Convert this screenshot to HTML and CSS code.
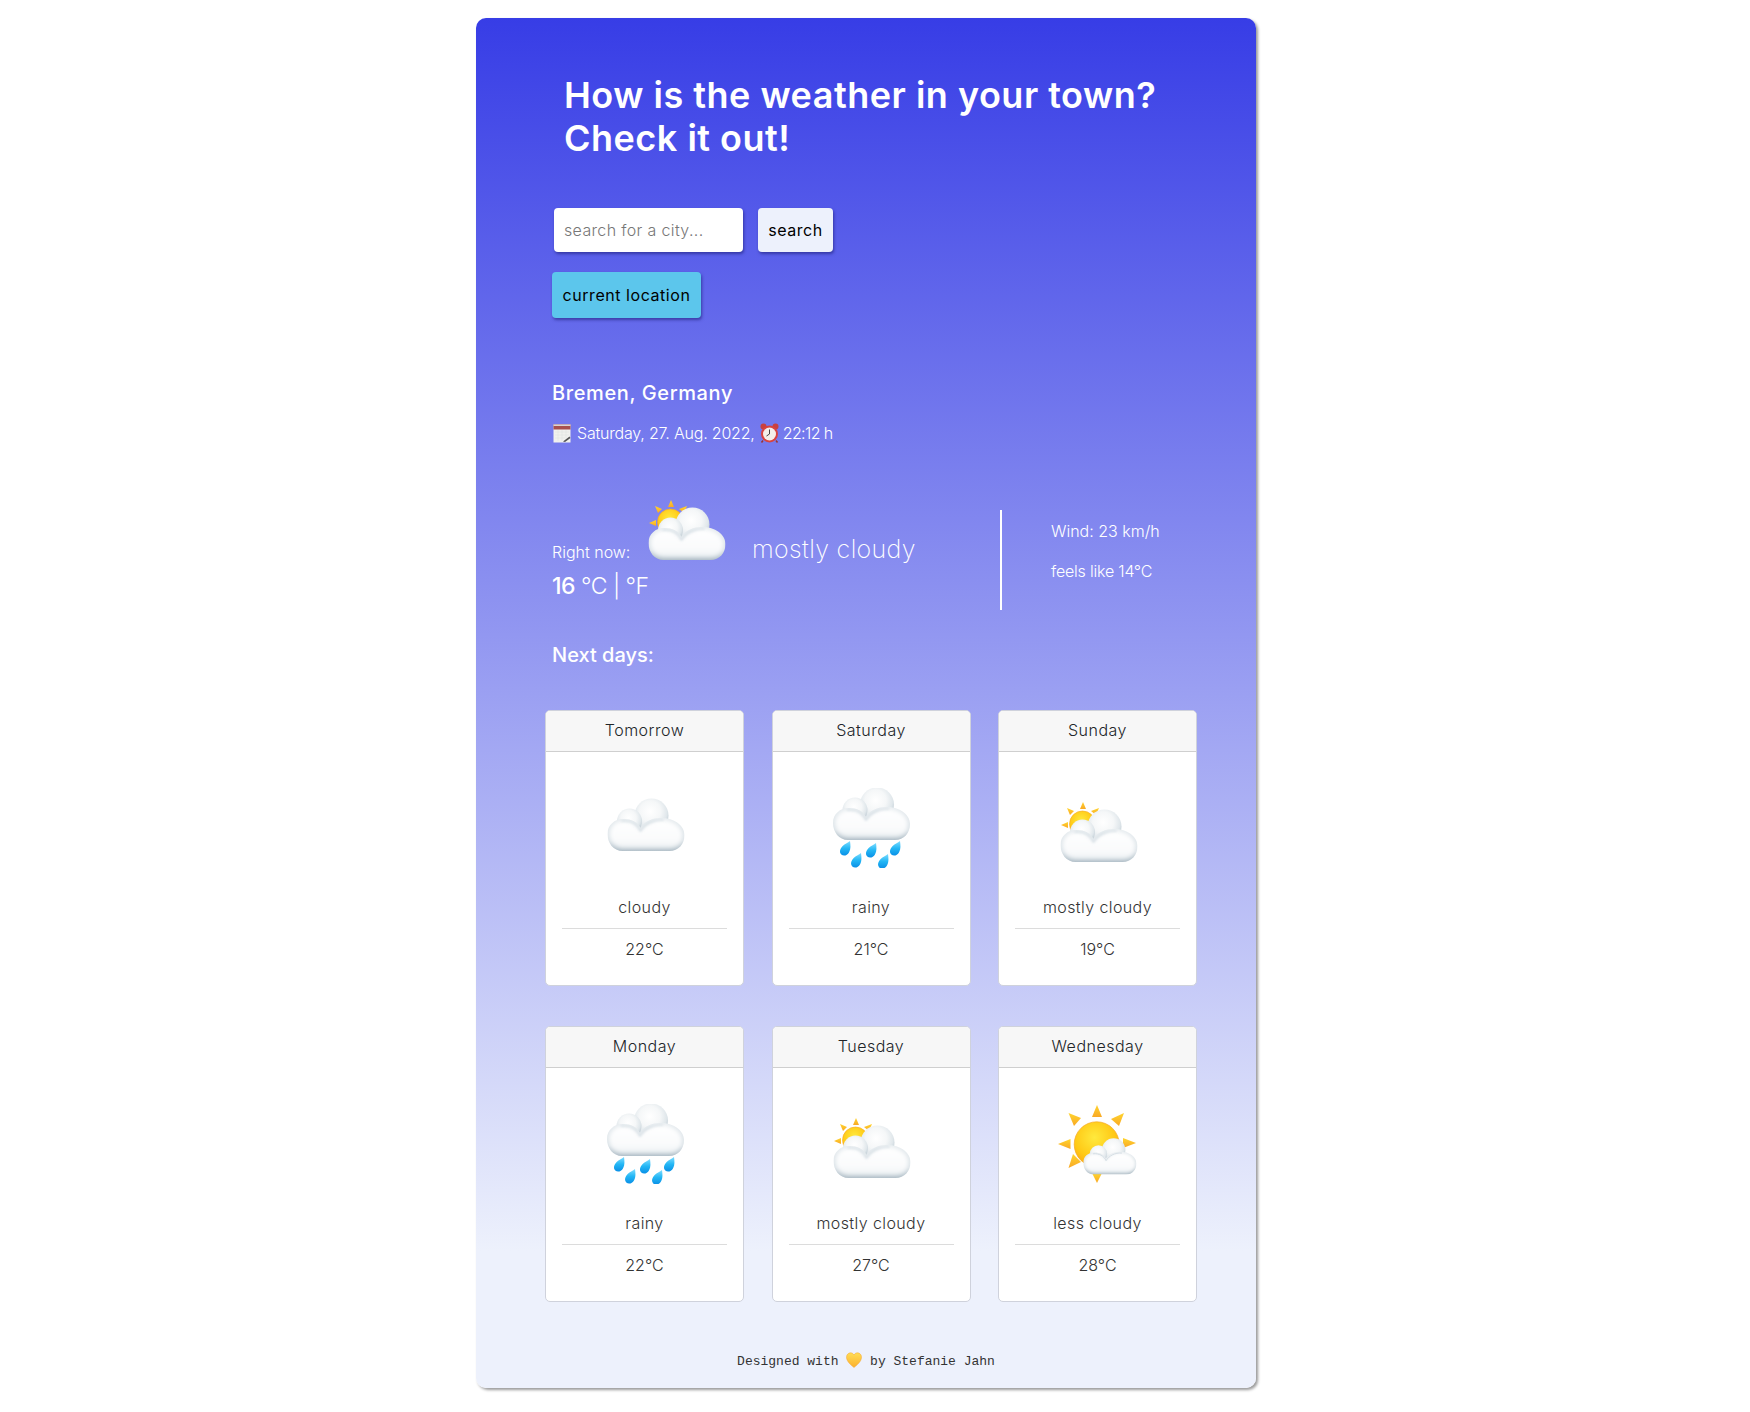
FILE: index.html
```html
<!DOCTYPE html>
<html lang="en">
<head>
<meta charset="utf-8">
<title>Weather</title>
<link rel="stylesheet" href="styles.css">
</head>
<body>
<svg class="defs" aria-hidden="true">
  <defs>
    <radialGradient id="cb" cx=".46" cy=".38" r=".62">
      <stop offset="0" stop-color="#ffffff"/><stop offset=".5" stop-color="#f5f7f8"/><stop offset=".8" stop-color="#e0e7eb"/><stop offset="1" stop-color="#c0ccd4"/>
    </radialGradient>
    <linearGradient id="cbase" x1="0" y1="0" x2="0" y2="1">
      <stop offset="0" stop-color="#e8edf0"/><stop offset=".7" stop-color="#d9e1e6"/><stop offset="1" stop-color="#a9b8c2"/>
    </linearGradient>
    <linearGradient id="cfill" x1="0" y1="0" x2="0" y2="1">
      <stop offset="0" stop-color="#ffffff"/><stop offset=".7" stop-color="#fafbfc"/><stop offset="1" stop-color="#eef2f4"/>
    </linearGradient>
    <radialGradient id="sun" cx=".45" cy=".35" r=".7">
      <stop offset="0" stop-color="#ffe93d"/><stop offset=".65" stop-color="#ffc814"/><stop offset="1" stop-color="#f9a01b"/>
    </radialGradient>
    <linearGradient id="ray" x1="0" y1="0" x2="0" y2="1">
      <stop offset="0" stop-color="#ffd52e"/><stop offset="1" stop-color="#f9a825"/>
    </linearGradient>
    <linearGradient id="drop" x1="0" y1="0" x2="0" y2="1">
      <stop offset="0" stop-color="#7fdcff"/><stop offset=".5" stop-color="#23b7f5"/><stop offset="1" stop-color="#0a8fe6"/>
    </linearGradient>
    <linearGradient id="heart" x1="0" y1="0" x2="0" y2="1">
      <stop offset="0" stop-color="#ffdd55"/><stop offset="1" stop-color="#fbb02d"/>
    </linearGradient>
    <filter id="soft" x="-20%" y="-20%" width="140%" height="140%"><feGaussianBlur stdDeviation="2.200"/></filter>
    <filter id="crease" x="-20%" y="-40%" width="140%" height="180%"><feGaussianBlur stdDeviation="1"/></filter>
    <clipPath id="cc"><path d="M15 51C6 51 0 43 0 34C0 25 7 19 16 19C24 19 30 22 33 28C37 21 45 18 54 18C66 18 77 25 77 35C77 44 71 51 62 51Z"/></clipPath>
    <g id="cloud">
      <circle cx="44" cy="15.500" r="17" fill="url(#cb)"/>
      <circle cx="22" cy="21" r="12.500" fill="url(#cb)"/>
      <g clip-path="url(#cc)">
        <rect x="-2" y="14" width="82" height="38" fill="url(#cbase)"/>
        <path d="M16 48C8 48 2 42 2 34C2 27 8 21 16 21C24 21 30 25 33 31C37 24 45 20 54 20C65 20 75 27 75 35C75 43 70 48 62 48Z" fill="url(#cfill)" filter="url(#soft)"/>
        <path d="M14 21C23 20 30 24 33 31C37 24 46 19 56 20" fill="none" stroke="#d5dee4" stroke-width="1.400" filter="url(#crease)"/>
      </g>
    </g>
    <g id="rd">
      <path d="M10 0C10.500 4 11 8 9 11.500C7.300 14.700 3.400 15.500 1.300 13.500C-.9 11.200 0 8 2.200 5.500C4.400 3 8 2 10 0Z" fill="url(#drop)"/>
    </g>
  </defs>
  <symbol id="i-cloud" viewBox="0 0 80 80"><use href="#cloud" transform="translate(2.500 12)"/></symbol>
  <symbol id="i-rain" viewBox="0 0 80 80">
    <use href="#cloud" transform="translate(2 1)"/>
    <use href="#rd" transform="translate(9 53)"/>
    <use href="#rd" transform="translate(20 65)"/>
    <use href="#rd" transform="translate(35 55)"/>
    <use href="#rd" transform="translate(47 66)"/>
    <use href="#rd" transform="translate(59 53)"/>
  </symbol>
  <symbol id="i-mostly" viewBox="0 0 80 80">
    <circle cx="24.500" cy="36" r="13" fill="url(#sun)" stroke="#f7a823" stroke-width=".6"/>
    <g fill="url(#ray)">
      <path d="M25 14L28 21L22 21Z"/>
      <path d="M3 37L10 34L10 40Z"/>
      <path d="M9 20L16 23L12 27Z"/>
      <path d="M41 20L38 27L33 23Z"/>
    </g>
    <use href="#cloud" transform="translate(2.500 23)"/>
  </symbol>
  <symbol id="i-less" viewBox="0 0 80 80">
    <circle cx="38.700" cy="40.300" r="22.500" fill="url(#sun)" stroke="#f7a823" stroke-width=".7"/>
    <g fill="url(#ray)">
      <path d="M39 1L44 13L34 13Z"/>
      <path d="M39 79L34 69L44 69Z"/>
      <path d="M0 40L12.500 35L12.500 45Z"/>
      <path d="M78 39L65 34L65 44Z"/>
      <path d="M10.500 9L23 14L16 22Z"/>
      <path d="M66 9L61 22L53 15Z"/>
      <path d="M10.500 64L15 50L23 58Z"/>
    </g>
    <use href="#cloud" transform="translate(25.300 35.300) scale(.69)"/>
  </symbol>
</svg>

<main class="app">
  <h1 class="title">How is the weather in your town?<br>Check it out!</h1>

  <form class="search">
    <input class="search-input" type="text" placeholder="search for a city...">
    <button class="btn btn-search" type="button">search</button>
  </form>
  <button class="btn btn-location" type="button">current location</button>

  <h2 class="city">Bremen, Germany</h2>
  <p class="date">
    <svg class="mini cal" viewBox="0 0 18 19"><rect x=".5" y=".5" width="17" height="18" fill="#f1f1ee"/><rect x=".5" y=".5" width="17" height="5" fill="#a8504f"/><rect x=".5" y=".5" width="17" height="1.500" fill="#d9d4d2"/><path d="M2 8H16M2 11H16M2 14H12M5 6V17M9 6V17M13 6V14" stroke="#dfe0dd" stroke-width=".5"/><path d="M10 17.500L16.500 12.500L17.500 14L12 18Z" fill="#555"/></svg>
    <span class="date-text">Saturday, 27. Aug. 2022,</span>
    <svg class="mini clock" viewBox="0 0 19 20"><circle cx="3.500" cy="3.500" r="3" fill="#c9413f"/><circle cx="15.500" cy="3.500" r="3" fill="#c9413f"/><path d="M3 17.500L1.500 19.500M16 17.500L17.500 19.500" stroke="#9b3432" stroke-width="1.500"/><circle cx="9.500" cy="11" r="8.500" fill="#d8433f"/><circle cx="9.500" cy="11" r="6.500" fill="#f4efea"/><path d="M9.500 6.500V11L6.500 13" fill="none" stroke="#444" stroke-width="1"/></svg>
    <span class="time-text">22:12 h</span>
  </p>

  <section class="now">
    <div class="now-main">
      <div class="now-top">
        <span class="now-label">Right now:</span>
        <svg class="wx now-icon"><use href="#i-mostly"/></svg>
        <span class="now-desc">mostly cloudy</span>
      </div>
      <div class="now-temp"><strong>16</strong> °C | °F</div>
    </div>
    <div class="now-side">
      <p>Wind: 23 km/h</p>
      <p class="feels">feels like 14°C</p>
    </div>
  </section>

  <h2 class="next">Next days:</h2>

  <section class="forecast">
    <article class="day">
      <header class="day-head">Tomorrow</header>
      <div class="day-body"><svg class="wx"><use href="#i-cloud"/></svg><p class="day-desc">cloudy</p></div>
      <p class="day-temp">22°C</p>
    </article>
    <article class="day">
      <header class="day-head">Saturday</header>
      <div class="day-body"><svg class="wx"><use href="#i-rain"/></svg><p class="day-desc">rainy</p></div>
      <p class="day-temp">21°C</p>
    </article>
    <article class="day">
      <header class="day-head">Sunday</header>
      <div class="day-body"><svg class="wx"><use href="#i-mostly"/></svg><p class="day-desc">mostly cloudy</p></div>
      <p class="day-temp">19°C</p>
    </article>
    <article class="day">
      <header class="day-head">Monday</header>
      <div class="day-body"><svg class="wx"><use href="#i-rain"/></svg><p class="day-desc">rainy</p></div>
      <p class="day-temp">22°C</p>
    </article>
    <article class="day">
      <header class="day-head">Tuesday</header>
      <div class="day-body"><svg class="wx"><use href="#i-mostly"/></svg><p class="day-desc">mostly cloudy</p></div>
      <p class="day-temp">27°C</p>
    </article>
    <article class="day">
      <header class="day-head">Wednesday</header>
      <div class="day-body"><svg class="wx"><use href="#i-less"/></svg><p class="day-desc">less cloudy</p></div>
      <p class="day-temp">28°C</p>
    </article>
  </section>

  <footer class="credit">Designed with <svg class="heart" viewBox="0 0 16 16"><path d="M8 15.500C5 13 .5 9.500 .5 5.200C.5 2.500 2.500 .8 4.500 .8C6 .8 7.300 1.600 8 3C8.700 1.600 10 .8 11.500 .8C13.500 .8 15.500 2.500 15.500 5.200C15.500 9.500 11 13 8 15.500Z" fill="url(#heart)" stroke="#f4a533" stroke-width=".5"/></svg> by Stefanie Jahn</footer>
</main>
</body>
</html>
```
FILE: styles.css
```css
* { box-sizing: border-box; }
html, body { margin: 0; padding: 0; background: #fff; }
body {
  padding-right: 18px;
  font-family: "Inter", "Open Sans", sans-serif;
  font-size: 16px;
  color: #212529;
}
p, h1, h2 { margin: 0; }

.defs { display: block; width: 0; height: 0; }

.app {
  width: 780px;
  height: 1370px;
  margin: 18px auto 24px;
  padding: 56px 54px 0 76px;
  border-radius: 10px;
  background: linear-gradient(#373de6, #edf1fc 90%);
  box-shadow: 2px 2px 3px rgba(0, 0, 0, .4);
  color: #fff;
}

.title {
  margin-left: 12px;
  font-size: 36px;
  line-height: 43px;
  font-weight: 600;
  white-space: nowrap;
  letter-spacing: .5px;
}

.search { display: flex; gap: 15px; margin: 48px 0 0 2px; }
.search-input {
  width: 189px;
  height: 44px;
  padding: 0 10px;
  border: 0;
  border-radius: 4px;
  background: #fff;
  font: 300 16px "Inter", sans-serif;
  letter-spacing: .35px;
  box-shadow: 1px 2px 3px rgba(20, 20, 100, .5);
}
.search-input::placeholder { color: #777; opacity: 1; }

.btn {
  display: block;
  border: 0;
  border-radius: 4px;
  color: #000;
  font: 400 16px "Inter", sans-serif;
  letter-spacing: .55px;
  padding: 0;
  box-shadow: 1px 2px 3px rgba(20, 20, 100, .5);
}
.btn-search { width: 75px; height: 44px; background: #edf1fc; }
.btn-location { width: 149px; height: 46px; margin-top: 20px; background: #5cc6ec; }

.city { margin-top: 61px; font-size: 20px; line-height: 28px; font-weight: 500; letter-spacing: .6px; }

.date {
  display: flex;
  align-items: center;
  margin-top: 14px;
  height: 24px;
  font-weight: 300;
  font-size: 16px;
}
.date-text { letter-spacing: -.2px; }
.time-text { letter-spacing: -.6px; }
.mini { display: block; flex: none; }
.cal { width: 18px; height: 19px; margin: 0 6px 0 1px; }
.clock { width: 19px; height: 20px; margin: 0 4px 0 5px; }

.now { display: flex; align-items: flex-start; margin-top: 41px; }
.now-main { width: 448px; }
.now-top { display: flex; align-items: flex-end; height: 80px; }
.now-label { width: 94px; padding-bottom: 2px; font-weight: 300; line-height: 24px; }
.now-desc { margin-left: 26px; padding-bottom: 2px; font-size: 25px; line-height: 30px; font-weight: 200; letter-spacing: .35px; white-space: nowrap; }
.now-temp { margin-top: 4px; font-size: 23px; line-height: 32px; font-weight: 300; letter-spacing: -.5px; }
.now-temp strong { font-weight: 500; }
.now-side {
  margin-top: 24px;
  height: 100px;
  padding: 9px 0 0 49px;
  border-left: 2px solid #fff;
  font-weight: 300;
  white-space: nowrap;
}
.now-side p { line-height: 24px; margin-bottom: 16px; }
.now-side .feels { letter-spacing: -.2px; }

.next { margin-top: 31px; font-size: 20px; line-height: 28px; font-weight: 500; }

.forecast {
  display: grid;
  grid-template-columns: repeat(3, 199px);
  gap: 40px 27.5px;
  width: 652px;
  margin: 41px 0 0 -7px;
}
.day {
  height: 276px;
  background: #fff;
  border: 1px solid #cfd2dc;
  border-radius: 5px;
  overflow: hidden;
  color: #333;
  font-weight: 300;
  text-align: center;
}
.day-head {
  height: 41px;
  line-height: 39px;
  background: #f7f7f7;
  border-bottom: 1px solid #cfcfcf;
  color: #212529;
  letter-spacing: .5px;
}
.day-body { margin: 0 16px; padding-top: 36px; height: 177px; border-bottom: 1px solid #dcdcdc; }
.wx { display: block; flex: none; width: 80px; height: 80px; margin: 0 auto; }
.now-icon { margin: 0; }
.day-desc { margin-top: 27px; line-height: 24px; letter-spacing: .4px; white-space: nowrap; }
.day-temp { margin-top: 8px; line-height: 24px; }

.credit {
  margin: 50px 0 0 -76px;
  width: 780px;
  font: 13px/20px "Liberation Mono", monospace;
  color: #333;
  text-align: center;
}
.heart { display: inline-block; width: 16px; height: 16px; vertical-align: -3px; }
```
